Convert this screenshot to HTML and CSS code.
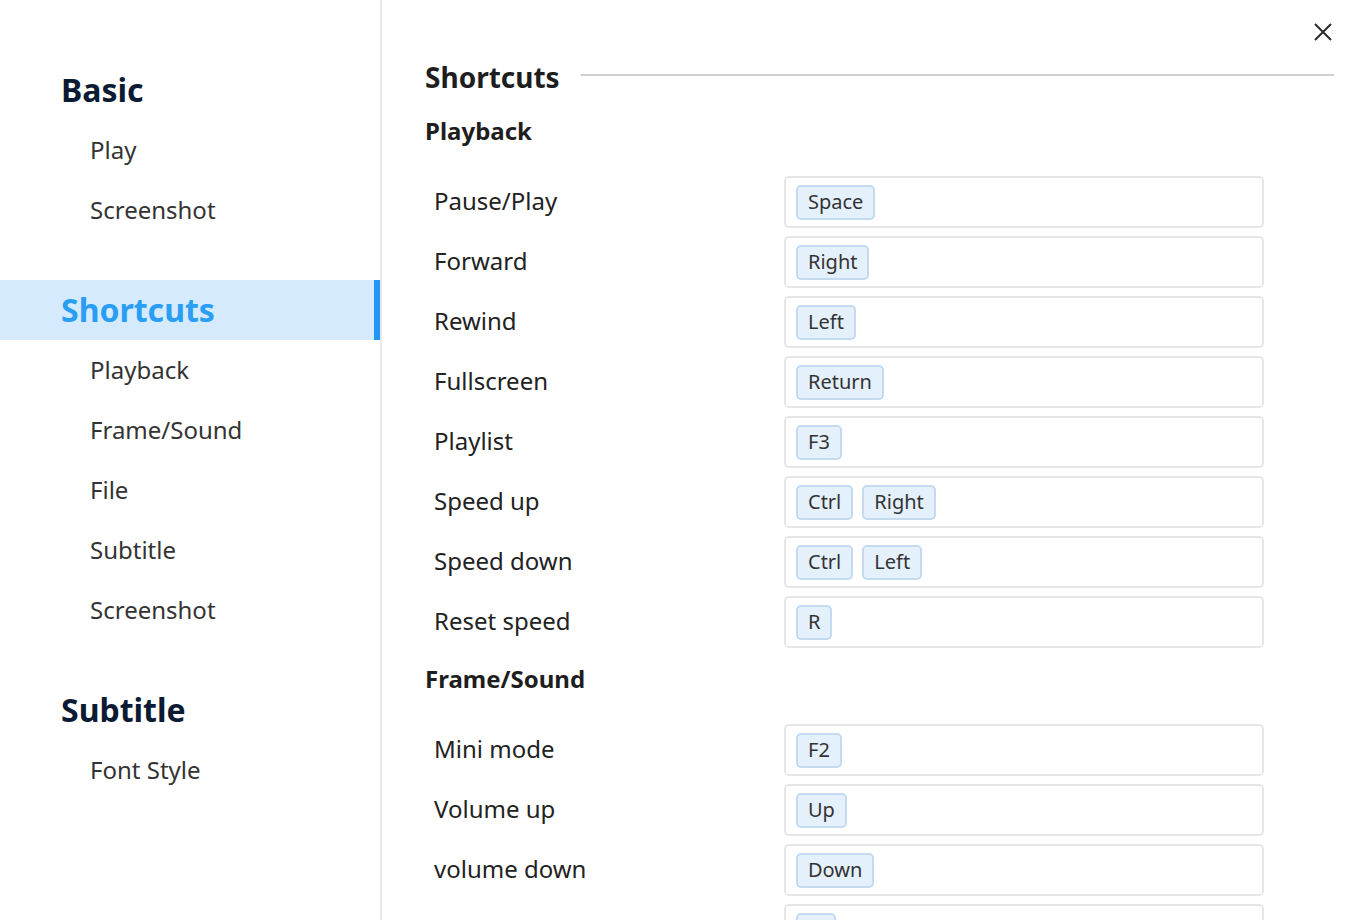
FILE: index.html
```html
<!DOCTYPE html>
<html lang="en">
<head>
<meta charset="utf-8">
<title>Settings</title>
<link rel="stylesheet" href="styles.css">
</head>
<body>
<div class="dialog">
  <nav class="sidebar">
    <div class="group">
      <div class="group-title">Basic</div>
      <div class="item">Play</div>
      <div class="item">Screenshot</div>
    </div>
    <div class="group">
      <div class="group-title active">Shortcuts</div>
      <div class="item">Playback</div>
      <div class="item">Frame/Sound</div>
      <div class="item">File</div>
      <div class="item">Subtitle</div>
      <div class="item">Screenshot</div>
    </div>
    <div class="group">
      <div class="group-title">Subtitle</div>
      <div class="item">Font Style</div>
    </div>
  </nav>
  <main class="content">
    <button class="close" aria-label="Close">
      <svg width="18" height="18" viewBox="0 0 18 18"><path d="M1 1L17 17M17 1L1 17" stroke="#2b2b2b" stroke-width="2" fill="none"/></svg>
    </button>
    <div class="title-row">
      <h1 class="title">Shortcuts</h1>
      <div class="title-line"></div>
    </div>
    <section class="section">
      <h2 class="subtitle">Playback</h2>
      <div class="row"><div class="label">Pause/Play</div><div class="keys"><span class="key">Space</span></div></div>
      <div class="row"><div class="label">Forward</div><div class="keys"><span class="key">Right</span></div></div>
      <div class="row"><div class="label">Rewind</div><div class="keys"><span class="key">Left</span></div></div>
      <div class="row"><div class="label">Fullscreen</div><div class="keys"><span class="key">Return</span></div></div>
      <div class="row"><div class="label">Playlist</div><div class="keys"><span class="key">F3</span></div></div>
      <div class="row"><div class="label">Speed up</div><div class="keys"><span class="key">Ctrl</span><span class="key">Right</span></div></div>
      <div class="row"><div class="label">Speed down</div><div class="keys"><span class="key">Ctrl</span><span class="key">Left</span></div></div>
      <div class="row"><div class="label">Reset speed</div><div class="keys"><span class="key">R</span></div></div>
    </section>
    <section class="section">
      <h2 class="subtitle">Frame/Sound</h2>
      <div class="row"><div class="label">Mini mode</div><div class="keys"><span class="key">F2</span></div></div>
      <div class="row"><div class="label">Volume up</div><div class="keys"><span class="key">Up</span></div></div>
      <div class="row"><div class="label">volume down</div><div class="keys"><span class="key">Down</span></div></div>
      <div class="row"><div class="label"></div><div class="keys"><span class="key">&nbsp;&nbsp;&nbsp;</span></div></div>
    </section>
  </main>
</div>
</body>
</html>
```
FILE: styles.css
```css
* { box-sizing: border-box; }
html, body {
  margin: 0;
  padding: 0;
  height: 920px;
  overflow: hidden;
  background: #fff;
  font-family: "Noto Sans", "Open Sans", sans-serif;
  color: #222;
}
.dialog {
  display: flex;
  height: 920px;
}
.sidebar {
  width: 382px;
  flex: none;
  border-right: 2px solid #e8e8e8;
  padding-top: 60px;
  display: flex;
  flex-direction: column;
  gap: 40px;
}
.group-title {
  height: 60px;
  line-height: 60px;
  padding-left: 61px;
  font-size: 32px;
  font-weight: 700;
  color: #0b1b33;
}
.group-title.active {
  background: #d5ebfd;
  color: #2a9df4;
  border-right: 6px solid #2196f3;
}
.item {
  height: 60px;
  line-height: 60px;
  padding-left: 90px;
  font-size: 24px;
  color: #333;
}
.content {
  flex: 1;
  position: relative;
  padding: 0 26px 0 43px;
}
.close {
  position: absolute;
  top: 23px;
  right: 28px;
  width: 18px;
  height: 18px;
  padding: 0;
  border: none;
  background: none;
  display: flex;
}
.title-row {
  display: flex;
  align-items: center;
  gap: 21px;
  height: 40px;
  margin-top: 57px;
}
.title {
  margin: 0;
  font-size: 28px;
  font-weight: 700;
  color: #1e1e1e;
  line-height: 38px;
}
.title-line {
  flex: 1;
  height: 2px;
  background: #cfcfcf;
  margin-top: -5px;
}
.subtitle {
  margin: 13px 0 0;
  font-size: 24px;
  font-weight: 700;
  color: #1e1e1e;
  line-height: 28px;
  padding-bottom: 27px;
}
.section:first-of-type .subtitle {
  margin-top: 20px;
}
.row {
  display: flex;
  align-items: center;
  height: 60px;
}
.label {
  width: 359px;
  flex: none;
  padding-left: 9px;
  font-size: 24px;
  line-height: 30px;
  margin-top: -2px;
  color: #222;
}
.keys {
  width: 480px;
  height: 52px;
  border: 2px solid #e6e6e6;
  border-radius: 5px;
  display: flex;
  align-items: center;
  gap: 9px;
  padding: 0 10px;
}
.key {
  height: 35px;
  line-height: 29px;
  padding: 0 10px;
  background: #e5f0fd;
  border: 2px solid #c3daf0;
  border-radius: 5px;
  font-size: 20px;
  color: #333;
}
```
